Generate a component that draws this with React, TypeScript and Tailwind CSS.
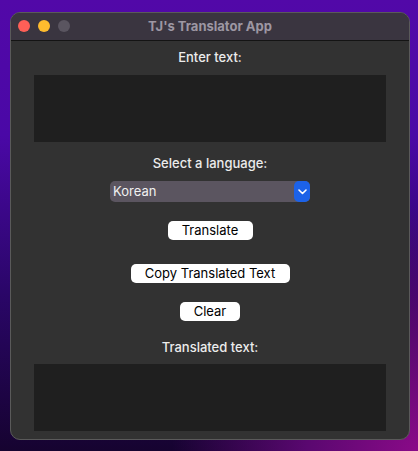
export default function App() {
  return (
    <div
      className="w-[418px] h-[451px] overflow-hidden pt-[12px] pl-[10px] bg-[radial-gradient(circle_at_100%_100%,#8a0a88_0%,#5a0870_18%,transparent_40%),linear-gradient(180deg,#5208a8_0%,#4a08a6_30%,#2a0668_65%,#160330_100%)]"
      style={{ fontFamily: 'Inter, "Noto Sans", "Liberation Sans", sans-serif' }}
    >
      {/* Window */}
      <div className="w-[400px] h-[428px] rounded-[10px] overflow-hidden border border-[#5a5a5a] bg-[#323232] flex flex-col">
        {/* Title bar */}
        <div className="relative h-[28px] bg-[#3a3540] border-b border-[#141414] flex items-center justify-center shrink-0">
          <div className="absolute left-[7px] top-[7px] flex gap-[8px]">
            <span className="w-[12px] h-[12px] rounded-full bg-[#fe5f57]" />
            <span className="w-[12px] h-[12px] rounded-full bg-[#febc2e]" />
            <span className="w-[12px] h-[12px] rounded-full bg-[#5a5560]" />
          </div>
          <span className="text-[13px] font-bold text-[#9d97a3]">TJ's Translator App</span>
        </div>

        {/* Content */}
        <div className="flex flex-col items-center text-[13px] text-[#ececec]">
          <div className="mt-[8px] h-[16px] leading-[16px] font-medium">Enter text:</div>
          <div className="mt-[10px] w-[352px] h-[67px] bg-[#1f1f1f]" />

          <div className="mt-[13px] h-[16px] leading-[16px] font-medium">Select a language:</div>
          <div className="mt-[10px] w-[200px] h-[21px] rounded-[5px] bg-[#5b5560] flex items-center justify-between">
            <span className="pl-[3px] text-[13px] text-[#f0f0f0]">Korean</span>
            <span className="w-[16px] h-[21px] rounded-[5px] bg-[#1c62e8] flex items-center justify-center">
              <svg width="9" height="6" viewBox="0 0 9 6" fill="none">
                <path d="M1 1l3.5 3.5L8 1" stroke="white" strokeWidth="1.6" strokeLinecap="round" strokeLinejoin="round" />
              </svg>
            </span>
          </div>

          <button className="mt-[19px] w-[85px] h-[19px] rounded-[5px] bg-white text-black text-[13px] leading-[19px]">
            Translate
          </button>
          <button className="mt-[24px] w-[159px] h-[19px] rounded-[5px] bg-white text-black text-[13px] leading-[19px]">
            Copy Translated Text
          </button>
          <button className="mt-[19px] w-[60px] h-[19px] rounded-[5px] bg-white text-black text-[13px] leading-[19px]">
            Clear
          </button>

          <div className="mt-[18px] h-[16px] leading-[16px] font-medium">Translated text:</div>
          <div className="mt-[9px] w-[352px] h-[67px] bg-[#1f1f1f]" />
        </div>
      </div>
    </div>
  );
}
